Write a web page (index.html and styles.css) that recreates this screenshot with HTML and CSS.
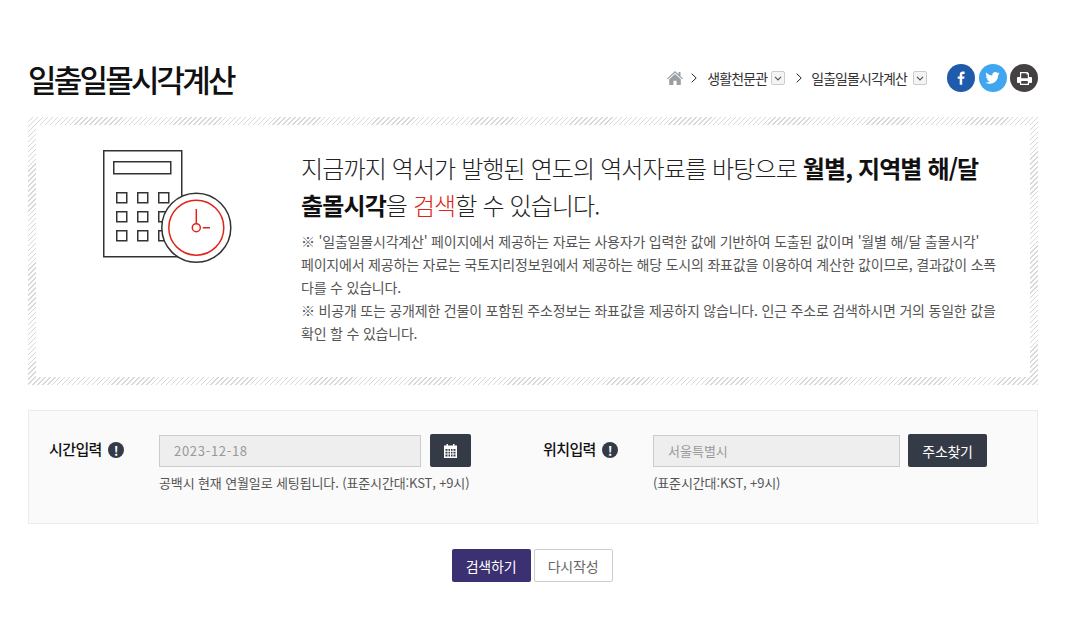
FILE: index.html
```html
<!DOCTYPE html>
<html lang="ko">
<head>
    <meta charset="UTF-8">
    <title>일출일몰시각계산</title>
    <link rel="stylesheet" href="styles.css">
</head>
<body>
    <div class="container">
        <div class="page-head">
            <h1>일출일몰시각계산</h1>
            <div class="breadcrumb">
                <svg class="home-icon" width="16" height="14" viewBox="0 0 16 14"><path d="M8 0 11.500 3.300V1H13.500V5.200L16 7.500 15.200 8.300 8 1.800 .8 8.300 0 7.500ZM8 3 13.800 8.200V14H9.600V9.800H6.400V14H2.200V8.200Z" fill="#9a9fa3"/></svg>
                <svg class="crumb-arrow" width="6" height="10" viewBox="0 0 6 10"><path d="M.7.7 5.200 5 .7 9.300" fill="none" stroke="#222" stroke-width="1"/></svg>
                <span class="crumb-text">생활천문관</span>
                <span class="crumb-select first"><svg width="8" height="5" viewBox="0 0 8 5"><path d="M1 .8 4 3.800 7 .8" fill="none" stroke="#555" stroke-width="1.200"/></svg></span>
                <svg class="crumb-arrow second" width="6" height="10" viewBox="0 0 6 10"><path d="M.7.7 5.200 5 .7 9.300" fill="none" stroke="#222" stroke-width="1"/></svg>
                <span class="crumb-text">일출일몰시각계산</span>
                <span class="crumb-select"><svg width="8" height="5" viewBox="0 0 8 5"><path d="M1 .8 4 3.800 7 .8" fill="none" stroke="#555" stroke-width="1.200"/></svg></span>
                <div class="share">
                    <span class="share-btn fb"><svg width="8" height="16" viewBox="0 0 10 17"><path d="M6.500 17V9.500H9L9.400 6.500H6.500V4.800C6.500 3.900 6.800 3.400 8 3.400H9.500V.7C9.200.6 8.300.5 7.200.5 5 .5 3.400 1.900 3.400 4.400V6.500H.9V9.500H3.400V17Z" fill="#fff"/></svg></span>
                    <span class="share-btn tw"><svg width="15" height="12" viewBox="0 0 18 15"><path d="M18 1.800C17.300 2.100 16.600 2.300 15.900 2.400 16.600 2 17.200 1.300 17.400.4 16.700.8 16 1.100 15.100 1.300 14.400.5 13.500 0 12.400 0 10.400 0 8.700 1.700 8.700 3.700 8.700 4 8.700 4.300 8.800 4.500 5.800 4.400 3.100 2.900 1.300.7 1 1.200.8 1.900.8 2.600.8 3.900 1.500 5 2.500 5.700 1.900 5.700 1.300 5.500.8 5.200V5.300C.8 7.100 2.100 8.600 3.800 8.900 3.500 9 3.200 9 2.800 9 2.600 9 2.400 9 2.100 9 2.600 10.400 3.900 11.500 5.600 11.500 4.300 12.500 2.700 13.100 1 13.100 .7 13.100.3 13.100 0 13 1.700 14.100 3.600 14.700 5.700 14.700 12.400 14.700 16.100 9.100 16.100 4.200V3.700C16.800 3.200 17.500 2.500 18 1.800Z" fill="#fff"/></svg></span>
                    <span class="share-btn pr"><svg width="15" height="13" viewBox="0 0 15 13"><path fill-rule="evenodd" d="M3 0H10.500L12 1.500V5H14C14.600 5 15 5.400 15 6V10C15 10.500 14.600 11 14 11H12V13H3V11H1C.4 11 0 10.500 0 10V6C0 5.400.4 5 1 5H3ZM4.200 1.200V6.200H10.800V2.500H9.500V1.200ZM4.200 9V11.800H10.800V9Z" fill="#fff"/></svg></span>
                </div>
            </div>
        </div>

        <div class="intro-box">
            <div class="intro-inner">
                <svg class="intro-icon" width="130" height="114" viewBox="0 0 130 114">
                    <g fill="none" stroke="#333" stroke-width="1.500">
                        <rect x=".75" y=".75" width="78" height="106"/>
                        <rect x="10.750" y="11.750" width="57" height="12"/>
                        <rect x="13.750" y="42.750" width="10" height="10"/>
                        <rect x="34.750" y="42.750" width="10" height="10"/>
                        <rect x="55.750" y="42.750" width="10" height="10"/>
                        <rect x="13.750" y="61.750" width="10" height="10"/>
                        <rect x="34.750" y="61.750" width="10" height="10"/>
                        <rect x="55.750" y="61.750" width="10" height="10"/>
                        <rect x="13.750" y="80.750" width="10" height="10"/>
                        <rect x="34.750" y="80.750" width="10" height="10"/>
                        <rect x="55.750" y="80.750" width="10" height="10"/>
                        <circle cx="93.300" cy="77.700" r="34.500" fill="#fff"/>
                    </g>
                    <g fill="none" stroke="#e2231a" stroke-width="1.500">
                        <circle cx="93.300" cy="77.700" r="27.500"/>
                        <circle cx="93.300" cy="77.700" r="4"/>
                        <path d="M93.300 59V73.700M99.700 77.700H107"/>
                    </g>
                </svg>
                <div class="intro-text">
                    <p class="lead">지금까지 역서가 발행된 연도의 역서자료를 바탕으로 <strong>월별, 지역별 해/달 출몰시각</strong>을 <em>검색</em>할 수 있습니다.</p>
                    <p class="note">※ '일출일몰시각계산' 페이지에서 제공하는 자료는 사용자가 입력한 값에 기반하여 도출된 값이며 '월별 해/달 출몰시각' 페이지에서 제공하는 자료는 국토지리정보원에서 제공하는 해당 도시의 좌표값을 이용하여 계산한 값이므로, 결과값이 소폭 다를 수 있습니다.<br>※ 비공개 또는 공개제한 건물이 포함된 주소정보는 좌표값을 제공하지 않습니다. 인근 주소로 검색하시면 거의 동일한 값을 확인 할 수 있습니다.</p>
                </div>
            </div>
        </div>

        <div class="search-box">
            <div class="field field-time">
                <label>시간입력 <span class="info-mark">!</span></label>
                <div class="field-body">
                    <div class="field-row">
                        <input class="text-input date-input" type="text" value="2023-12-18" disabled>
                        <button class="dark-btn cal-btn" type="button"><svg width="13" height="14" viewBox="0 0 13 14"><path fill-rule="evenodd" d="M2.500 0H4V1.500H9V0H10.500V1.500H13V14H0V1.500H2.500ZM1.500 5V6.800H3.500V5ZM4.500 5V6.800H6V5ZM7 5V6.800H8.500V5ZM9.500 5V6.800H11.500V5ZM1.500 7.800V9.600H3.500V7.800ZM4.500 7.800V9.600H6V7.800ZM7 7.800V9.600H8.500V7.800ZM9.500 7.800V9.600H11.500V7.800ZM1.500 10.600V12.500H3.500V10.600ZM4.500 10.600V12.500H6V10.600ZM7 10.600V12.500H8.500V10.600ZM9.500 10.600V12.500H11.500V10.600Z" fill="#fff"/></svg></button>
                    </div>
                    <p class="hint">공백시 현재 연월일로 세팅됩니다. (표준시간대:KST, +9시)</p>
                </div>
            </div>
            <div class="field field-place">
                <label>위치입력 <span class="info-mark">!</span></label>
                <div class="field-body">
                    <div class="field-row">
                        <input class="text-input place-input" type="text" value="서울특별시" disabled>
                        <button class="dark-btn addr-btn" type="button">주소찾기</button>
                    </div>
                    <p class="hint">(표준시간대:KST, +9시)</p>
                </div>
            </div>
        </div>

        <div class="actions">
            <button class="btn-search" type="button">검색하기</button>
            <button class="btn-reset" type="button">다시작성</button>
        </div>
    </div>
</body>
</html>
```

FILE: styles.css
```css
* {
    box-sizing: border-box;
}
body {
    margin: 0;
    background-color: #fff;
    font-family: "Noto Sans CJK KR", "Noto Sans", sans-serif;
    color: #333;
}
.container {
    width: 1010px;
    margin-left: 28px;
    padding-top: 55px;
}
.page-head {
    display: flex;
    justify-content: space-between;
    align-items: center;
    height: 46px;
    margin-bottom: 16px;
}
h1 {
    margin: 0;
    font-size: 31px;
    font-weight: 500;
    letter-spacing: -2.800px;
    color: #111;
}
.breadcrumb {
    display: flex;
    align-items: center;
    font-size: 14px;
    letter-spacing: -0.9px;
    color: #333;
}
.home-icon {
    margin-right: 8px;
}
.crumb-arrow {
    margin-right: 10px;
}
.crumb-arrow.second {
    margin-left: 11px;
    margin-right: 9px;
}
.crumb-select {
    display: flex;
    align-items: center;
    justify-content: center;
    width: 14px;
    height: 14px;
    margin-left: 6px;
    border: 1px solid #ccc;
    border-radius: 2px;
    background-color: #f4f4f4;
}
.crumb-select.first {
    margin-left: 4px;
}
.share {
    display: flex;
    gap: 3.500px;
    margin-left: 20px;
}
.share-btn {
    display: flex;
    align-items: center;
    justify-content: center;
    width: 28px;
    height: 28px;
    border-radius: 50%;
}
.fb {
    background-color: #1f5bab;
}
.tw {
    background-color: #41a6f0;
}
.pr {
    background-color: #454041;
}
.intro-box {
    height: 268px;
    padding: 8px;
    background: repeating-linear-gradient(-45deg, #d8d8d8 0, #d8d8d8 1px, #fff 1px, #fff 3.500px);
}
.intro-inner {
    display: flex;
    height: 100%;
    padding: 25px 30px 0 67px;
    background-color: #fff;
}
.intro-icon {
    flex: none;
    margin-right: 68px;
}
.intro-text {
    margin-top: -1px;
}
.lead {
    margin: 0 0 7px;
    font-size: 24px;
    font-weight: 300;
    line-height: 37px;
    letter-spacing: -0.87px;
    color: #222;
    word-break: keep-all;
}
.lead strong {
    font-weight: 700;
    color: #111;
}
.lead em {
    font-style: normal;
    color: #e2231a;
}
.note {
    margin: 0;
    font-size: 14px;
    line-height: 23px;
    letter-spacing: -0.2px;
    color: #555;
    word-break: keep-all;
}
.search-box {
    display: flex;
    height: 114px;
    margin-top: 25px;
    padding: 23px 20px 0;
    border: 1px solid #ebebeb;
    background-color: #fafafa;
}
.field {
    display: flex;
}
.field-time {
    width: 494px;
}
.field label {
    display: flex;
    align-items: flex-start;
    width: 110px;
    padding-top: 4px;
    font-size: 15px;
    font-weight: 500;
    letter-spacing: -0.6px;
    color: #111;
}
.info-mark {
    display: flex;
    align-items: center;
    justify-content: center;
    width: 16px;
    height: 16px;
    margin: 4px 0 0 6px;
    border-radius: 50%;
    background-color: #343a46;
    font-size: 13px;
    font-weight: 700;
    color: #fff;
}
.field-row {
    display: flex;
    align-items: center;
    height: 33px;
}
.text-input {
    height: 32px;
    padding: 0 14px;
    border: 1px solid #ccc;
    background-color: #eee;
    font-family: inherit;
    font-size: 13px;
    color: #999;
}
.date-input {
    width: 262px;
    letter-spacing: 0.7px;
}
.place-input {
    width: 247px;
}
.dark-btn {
    height: 33px;
    margin-left: 9px;
    padding: 0;
    border: 0;
    border-radius: 2px;
    background-color: #343a46;
    font-family: inherit;
    font-size: 14px;
    letter-spacing: -0.3px;
    color: #fff;
}
.addr-btn {
    width: 79px;
    margin-left: 8px;
}
.cal-btn {
    display: flex;
    align-items: center;
    justify-content: center;
    width: 41px;
}
.hint {
    margin: 6px 0 0;
    font-size: 13px;
    letter-spacing: -0.13px;
    color: #555;
}
.actions {
    display: flex;
    justify-content: center;
    gap: 3px;
    margin-top: 25px;
    padding-right: 2px;
}
.actions button {
    width: 79px;
    height: 33px;
    border-radius: 2px;
    font-family: inherit;
    font-size: 14px;
    letter-spacing: -0.2px;
}
.btn-search {
    border: 0;
    background-color: #3b3071;
    color: #fff;
}
.btn-reset {
    border: 1px solid #ccc;
    background-color: #fff;
    color: #666;
}
```
